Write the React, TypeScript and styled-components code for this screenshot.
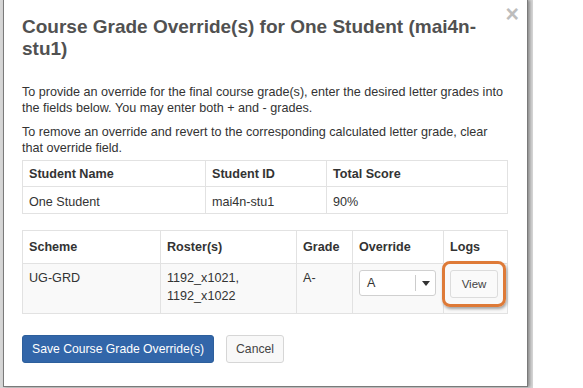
import styled, { createGlobalStyle } from "styled-components";

const GlobalStyle = createGlobalStyle`
  html, body {
    margin: 0;
    padding: 0;
    background: #ffffff;
  }
  body {
    font-family: "Liberation Sans", Arial, sans-serif;
    color: #333;
  }
`;

const Page = styled.div`
  width: 583px;
  height: 388px;
  overflow: hidden;
  display: flex;
  align-items: flex-start;
`;

const Backdrop = styled.div`
  width: 533px;
  height: 388px;
  background: #d6d6d6;
  padding-left: 3px;
  box-sizing: border-box;
`;

const Modal = styled.div`
  width: 525px;
  height: 387px;
  box-sizing: border-box;
  background: #fff;
  border: 1px solid #7a7a7a;
  border-top: none;
  box-shadow: 2px 0 3px rgba(0, 0, 0, 0.35);
  padding: 16px 18px 0 18px;
  position: relative;
`;

const Close = styled.span`
  position: absolute;
  top: 3px;
  right: 8px;
  font-size: 23px;
  font-weight: bold;
  color: #bdbdbd;
  line-height: 22px;
`;

const Title = styled.h3`
  margin: 0;
  font-size: 19px;
  line-height: 22px;
  font-weight: bold;
  color: #515151;
`;

const Body = styled.div`
  padding-top: 24px;
`;

const Para = styled.p`
  margin: 0 0 8px;
  font-size: 12.6px;
  line-height: 16px;

  &:last-of-type {
    margin-bottom: 4px;
  }
`;

const Table = styled.table<{ $mt?: number }>`
  width: 486px;
  border-collapse: collapse;
  margin-top: ${(p) => p.$mt ?? 0}px;
  font-size: 12.6px;

  th,
  td {
    border: 1px solid #e2e2e2;
    text-align: left;
    padding: 0 6px;
    vertical-align: top;
  }
  th {
    font-weight: bold;
    color: #333;
  }
`;

const HeadRow = styled.tr<{ $h: number }>`
  height: ${(p) => p.$h}px;
  th {
    vertical-align: middle;
  }
`;

const DataRow = styled.tr<{ $h: number; $shade?: boolean }>`
  height: ${(p) => p.$h}px;
  background: ${(p) => (p.$shade ? "#f9f9f9" : "#fff")};
  td {
    padding-top: ${(p) => (p.$shade ? 5 : 6)}px;
    line-height: 18px;
  }
`;

const Select = styled.div`
  display: flex;
  align-items: center;
  width: 77px;
  height: 26px;
  box-sizing: border-box;
  border: 1px solid #d0d0d0;
  border-radius: 3px;
  background: #fff;
  margin-top: 1px;
  padding-left: 7px;
`;

const SelectValue = styled.span`
  flex: 1;
`;

const SelectArrow = styled.span`
  width: 19px;
  height: 16px;
  border-left: 1px solid #ccc;
  display: flex;
  align-items: center;
  justify-content: center;

  &::after {
    content: "";
    border-left: 4px solid transparent;
    border-right: 4px solid transparent;
    border-top: 5px solid #333;
  }
`;

const Highlight = styled.div`
  position: relative;
  width: 48px;
  margin-top: 1px;

  &::before {
    content: "";
    position: absolute;
    left: -8px;
    right: -8px;
    top: -9px;
    bottom: -9px;
    border: 3px solid #de7a37;
    border-radius: 8px;
    box-shadow: 1px 2px 3px rgba(0, 0, 0, 0.35);
  }
`;

const Button = styled.button<{ $primary?: boolean }>`
  font-family: "Liberation Sans", Arial, sans-serif;
  font-size: 12.2px;
  height: 28px;
  padding: 0 9px;
  border-radius: 3px;
  border: 1px solid ${(p) => (p.$primary ? "#2d5f9c" : "#d6d6d6")};
  background: ${(p) => (p.$primary ? "#3266a9" : "#f8f8f8")};
  color: ${(p) => (p.$primary ? "#fff" : "#444")};
`;

const SmallButton = styled(Button)`
  width: 48px;
  padding: 0;
  font-size: 11.5px;
  background: #fafafa;
  border-color: #dcdcdc;
`;

const Footer = styled.div`
  display: flex;
  gap: 12px;
  margin-top: 21px;
`;

export default function App() {
  return (
    <>
      <GlobalStyle />
      <Page>
        <Backdrop>
          <Modal>
            <Close>×</Close>
            <Title>Course Grade Override(s) for One Student (mai4n-stu1)</Title>
            <Body>
              <Para>
                To provide an override for the final course grade(s), enter the desired letter grades into the
                fields below. You may enter both + and - grades.
              </Para>
              <Para>
                To remove an override and revert to the corresponding calculated letter grade, clear that
                override field.
              </Para>
              <Table>
                <thead>
                  <HeadRow $h={26}>
                    <th style={{ width: 170 }}>Student Name</th>
                    <th style={{ width: 108 }}>Student ID</th>
                    <th>Total Score</th>
                  </HeadRow>
                </thead>
                <tbody>
                  <DataRow $h={27}>
                    <td>One Student</td>
                    <td>mai4n-stu1</td>
                    <td>90%</td>
                  </DataRow>
                </tbody>
              </Table>
              <Table $mt={16}>
                <thead>
                  <HeadRow $h={33}>
                    <th style={{ width: 125 }}>Scheme</th>
                    <th style={{ width: 123 }}>Roster(s)</th>
                    <th style={{ width: 43 }}>Grade</th>
                    <th style={{ width: 78 }}>Override</th>
                    <th>Logs</th>
                  </HeadRow>
                </thead>
                <tbody>
                  <DataRow $h={50} $shade>
                    <td>UG-GRD</td>
                    <td>
                      1192_x1021,
                      <br />
                      1192_x1022
                    </td>
                    <td>A-</td>
                    <td>
                      <Select>
                        <SelectValue>A</SelectValue>
                        <SelectArrow />
                      </Select>
                    </td>
                    <td>
                      <Highlight>
                        <SmallButton>View</SmallButton>
                      </Highlight>
                    </td>
                  </DataRow>
                </tbody>
              </Table>
              <Footer>
                <Button $primary>Save Course Grade Override(s)</Button>
                <Button>Cancel</Button>
              </Footer>
            </Body>
          </Modal>
        </Backdrop>
      </Page>
    </>
  );
}
